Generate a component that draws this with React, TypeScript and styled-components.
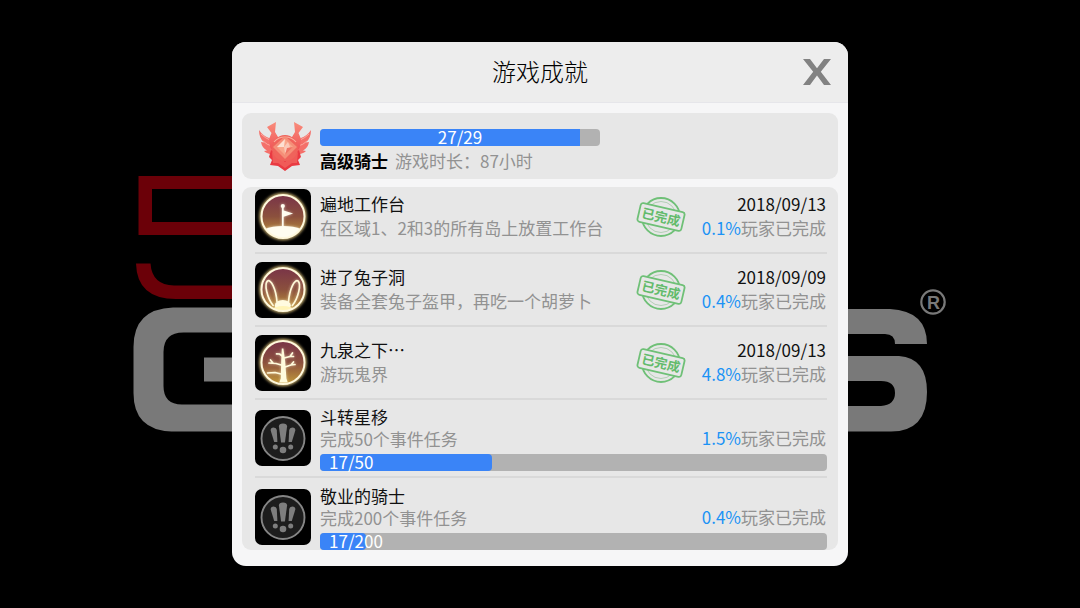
import React from "react";
import styled, { createGlobalStyle } from "styled-components";

const GlobalStyle = createGlobalStyle`
  *, *::before, *::after { box-sizing: border-box; }
  body {
    margin: 0;
    background: #000;
    color: #111;
    font-family: "Noto Sans CJK SC", "Noto Sans", sans-serif;
    font-size: 17px;
    line-height: 24px;
  }
  h1, h2, h3, p, ul { margin: 0; padding: 0; font: inherit; }
`;

const Page = styled.main`
  min-height: 100vh;
  display: flex;
  align-items: center;
  justify-content: center;
  position: relative;
`;

const Backdrop = styled.svg`
  position: absolute;
  inset: 0;
  width: 100%;
  height: 100%;
`;

const Dialog = styled.section`
  position: relative;
  width: 100%;
  max-width: 616px;
  border-radius: 14px;
  overflow: hidden;
  background: #f6f6f7;
`;

const Header = styled.header`
  display: grid;
  grid-template-columns: 1fr auto 1fr;
  align-items: center;
  height: 61px;
  padding: 0 17px;
  background: #ededed;
  border-bottom: 1px solid #e6e6ea;
`;

const Title = styled.h1`
  grid-column: 2;
  padding-bottom: 2px;
  font-size: 24px;
  font-weight: 300;
  line-height: 32px;
  color: #000;
`;

const CloseButton = styled.button`
  justify-self: end;
  display: flex;
  padding: 0;
  border: 0;
  background: none;
  color: #828282;
  cursor: pointer;
`;

const Body = styled.div`
  display: flex;
  flex-direction: column;
  gap: 8px;
  padding: 10px 10px 16px;
`;

const Profile = styled.section`
  display: flex;
  gap: 9px;
  padding: 8px 17px 6px;
  border-radius: 9px;
  background: #e7e7e7;
`;

const ProfileInfo = styled.div`
  flex: 1;
  max-width: 280px;
  padding-top: 8px;
`;

const ProfileLine = styled.p`
  display: flex;
  gap: 7px;
  padding-top: 2px;
  line-height: 25px;
  color: #929292;
  white-space: nowrap;
`;

const RankName = styled.strong`
  font-weight: 700;
  color: #000;
`;

const Track = styled.div<{ $centered?: boolean }>`
  position: relative;
  height: 17px;
  border-radius: 4px;
  background: #b2b2b2;
  color: #fff;
  line-height: 16px;
  padding-left: ${(p) => (p.$centered ? "0" : "9px")};
  text-align: ${(p) => (p.$centered ? "center" : "left")};
`;

const Fill = styled.div<{ $square?: boolean }>`
  position: absolute;
  inset: 0 auto 0 0;
  border-radius: ${(p) => (p.$square ? "4px 0 0 4px" : "4px")};
  background: #3a84f7;
`;

const TrackLabel = styled.span`
  position: relative;
`;

const List = styled.ul`
  list-style: none;
  padding: 0 11px 0 13px;
  border-radius: 9px;
  background: #e7e7e7;
`;

const Item = styled.li<{ $progress: boolean }>`
  display: flex;
  align-items: ${(p) => (p.$progress ? "flex-start" : "center")};
  gap: 9px;
  padding: ${(p) => (p.$progress ? "6px 0 5px" : "8px 0 7px")};
  border-bottom: 2px solid #d9d9d9;
  line-height: ${(p) => (p.$progress ? "22px" : "24px")};

  &:first-child { padding-top: 2px; }
  &:last-child { padding: 7px 0 0; border-bottom: 0; }
`;

const Tile = styled.div<{ $progress: boolean }>`
  flex: none;
  width: 56px;
  height: 56px;
  margin-top: ${(p) => (p.$progress ? "4px" : "0")};
  border-radius: 7px;
  overflow: hidden;
  background: #000;
  svg { display: block; }
`;

const Content = styled.div`
  flex: 1;
  min-width: 0;
`;

const Columns = styled.div`
  display: flex;
  align-items: flex-end;
  gap: 16px;
`;

const Texts = styled.div<{ $progress: boolean }>`
  flex: 1;
  min-width: 0;
  padding-bottom: ${(p) => (p.$progress ? "0" : "2px")};
`;

const Name = styled.h2`
  color: #111;
`;

const Description = styled.p`
  color: #929292;
  white-space: nowrap;
`;

const Meta = styled.div<{ $progress: boolean }>`
  padding: ${(p) => (p.$progress ? "0 1px 1px 0" : "0 1px 2px 0")};
  text-align: right;
  white-space: nowrap;
`;

const DateText = styled.time`
  display: block;
  color: #111;
`;

const Rate = styled.p`
  color: #929292;
`;

const Percent = styled.span`
  color: #1c93f5;
`;

const BarSlot = styled.div`
  padding-top: 4px;
`;

const StampSvg = styled.svg`
  flex: none;
  align-self: center;
`;

function Stamp() {
  return (
    <StampSvg width="50" height="42" viewBox="0 0 50 42" role="img" aria-label="已完成">
      <g fill="none" stroke="#6fc077">
        <circle cx="25" cy="21" r="19" strokeWidth="1.8" />
        <circle cx="25" cy="21" r="15.5" stroke="#b3cfb6" strokeWidth="1" />
      </g>
      <g transform="rotate(13 25 21)">
        <rect x="2.5" y="11.5" width="45" height="19" rx="2.5" fill="#e7e7e7" stroke="#6fc077" strokeWidth="1.8" />
        <text x="25" y="25.8" textAnchor="middle" fontSize="13" fontWeight="700" fill="#62bb6b">已完成</text>
      </g>
    </StampSvg>
  );
}

function BadgeHalf() {
  return (
    <g>
      <path d="M0 9Q4 15 10 17L16 24V34Q8 33 5 30L8 29.500Q3 27 2 21L5 21.500Q0 17 0 9z" fill="#f4706a" />
      <path d="M2 13q4 4 9 6M4 20q4 4 9 5" fill="none" stroke="#fbaaa0" strokeWidth="1" />
      <path d="M8 6 17 1 16 11 19 16 26 18V34H16L11 26 10 18 12.500 12z" fill="url(#wing)" />
      <path d="M12 29 26 38v12l-7-5-8-1 2-5-3-3z" fill="#e93a42" />
      <path d="M13 31 26 41v6l-7-5-5 0z" fill="#f05b58" />
    </g>
  );
}

function RankBadge() {
  return (
    <svg width="52" height="52" viewBox="0 0 52 52" aria-hidden="true">
      <defs>
        <linearGradient id="wing" x1="0" y1="0" x2="0" y2="1">
          <stop offset="0" stopColor="#f98d7c" />
          <stop offset="1" stopColor="#ee4a50" />
        </linearGradient>
      </defs>
      <BadgeHalf />
      <g transform="matrix(-1 0 0 1 52 0)">
        <BadgeHalf />
      </g>
      <circle cx="26" cy="27" r="13" fill="#ef635b" />
      <path d="M15 21q4-5 11-5t11 5" fill="none" stroke="#fbb09f" strokeWidth="1.2" />
      <path d="m26 15 12 11-12 12-12-12z" fill="#f58e78" />
      <path d="m26 18 8 8-8 8-8-8z" fill="#f9a78b" />
      <path d="m26 18-1 8-7 0z" fill="#fde0d2" />
      <path d="m25 26 4-5 2 5-5 6z" fill="#fbc9b8" />
      <path d="m34 26-8 8 2-7z" fill="#ef7465" />
    </svg>
  );
}

type IconKind = "flag" | "rabbit" | "tree" | "locked";

function Glow({ id, children }: { id: string; children: React.ReactNode }) {
  return (
    <svg width="56" height="56" viewBox="0 0 56 56" aria-hidden="true">
      <defs>
        <linearGradient id={`${id}-sky`} x1="0" y1="0" x2="0" y2="1">
          <stop offset="0" stopColor="#793448" />
          <stop offset="0.5" stopColor="#8b503d" />
          <stop offset="1" stopColor="#c29a3b" />
        </linearGradient>
        <clipPath id={`${id}-clip`}>
          <circle cx="28" cy="27.5" r="21.5" />
        </clipPath>
        <filter id={`${id}-blur`} x="-30%" y="-30%" width="160%" height="160%">
          <feGaussianBlur stdDeviation="1.4" />
        </filter>
      </defs>
      <circle cx="28" cy="27.5" r="22" fill="none" stroke="#e8cc84" strokeWidth="3" filter={`url(#${id}-blur)`} />
      <circle cx="28" cy="27.5" r="21.5" fill={`url(#${id}-sky)`} />
      <g clipPath={`url(#${id}-clip)`}>
        <g filter={`url(#${id}-blur)`} opacity="0.6">{children}</g>
        {children}
      </g>
      <circle cx="28" cy="27.5" r="21.5" fill="none" stroke="#fff8dc" strokeWidth="2" />
    </svg>
  );
}

function AchievementIcon({ kind }: { kind: IconKind }) {
  if (kind === "flag") {
    return (
      <Glow id="flag">
        <ellipse cx="28" cy="48" rx="26" ry="11" fill="#fffdf0" />
        <circle cx="27.8" cy="17" r="2.1" fill="#fffdf0" />
        <path d="M26.9 17h1.8v4.6l9.4 3-9.4 3.2V38h-1.8z" fill="#fffdf0" />
      </Glow>
    );
  }
  if (kind === "rabbit") {
    return (
      <Glow id="rabbit">
        <g fill="none" stroke="#fff9d8" strokeWidth="1.7">
          <path d="M18.500 44C12 36 9 22 12.500 19 16 17 21 27 22 40" />
          <path d="M37 44C43.500 36 46.500 22 43 19 39.500 17 34.500 27 33.500 40" />
        </g>
        <ellipse cx="27.800" cy="43.500" rx="8" ry="5.500" fill="#fffbe0" />
        <path d="M10 52q8-8 18-8t18 8z" fill="#fff4b8" />
      </Glow>
    );
  }
  if (kind === "tree") {
    return (
      <Glow id="tree">
        <path d="M26.800 13.500h1.600l1.800 13 1.200 17 1.400 4h-8.600l1.600-4 .4-17z" fill="#fffbdc" />
        <g fill="none" stroke="#fffbdc" strokeWidth="1.7" strokeLinecap="round" strokeLinejoin="round">
          <path d="M28 21.500l-3.500-2.500-3-.2M29 23l6-1.500 2.500-3.500M35 21.500h3.500M28 30.500l-7-2-7-.5M18 28l-2.500-3M30 32l6-2 2.500-3M36 30l4-.5M28 39.500l-8-2-7.500.5" />
        </g>
      </Glow>
    );
  }
  return (
    <svg width="56" height="56" viewBox="0 0 56 56" aria-hidden="true">
      <circle cx="28" cy="28.500" r="21.500" fill="#1d1d1d" stroke="#858585" strokeWidth="1.900" />
      <g fill="#7e7e7e">
        <path d="M23.900 16.500q0-3 4.100-3t4.100 3L29.900 32.500h-3.800z" />
        <circle cx="28" cy="40" r="3.300" />
        <path d="M15.700 20.500q-.3-3 3-3 2.700 0 3.100 2.500l.6 12h-3.200z" />
        <circle cx="20.300" cy="37" r="2.500" />
        <path d="M40.300 20.500q.3-3-3-3-2.700 0-3.100 2.500l-.6 12h3.200z" />
        <circle cx="35.700" cy="37" r="2.500" />
      </g>
    </svg>
  );
}

function BackgroundLogo() {
  return (
    <Backdrop viewBox="0 0 1080 608" preserveAspectRatio="xMidYMid slice" aria-hidden="true">
      <g fill="#6b0008">
        <path fillRule="evenodd" d="M138.500 176H300v59H138.500zM152 189v33h148v-33z" />
        <path d="M136 263.500h14.500Q152 285 174 285.500h126V299H176Q137 299 136 263.500z" />
      </g>
      <g fill="#797979">
        <path d="M300 307.500H173Q133.500 309 133.500 347v46q0 37 38 38.500H300v-74h-96v24h66v23h-88q-18.500 0-18.500-18.500V352q0-19.500 20-19.500H300z" />
        <path d="M780 309h110q37 2 37 35h-32q0-10-10-10H780z" />
        <path d="M780 356h119q28 2 28 36 0 39.500-36 39.500H780V406h101q14-1 14-13t-14-12H780z" />
        <text x="933.500" y="308.500" textAnchor="middle" fontFamily="Liberation Sans, sans-serif" fontSize="18" fontWeight="700">R</text>
      </g>
      <circle cx="933" cy="302" r="11.700" fill="none" stroke="#797979" strokeWidth="2.200" />
    </Backdrop>
  );
}

interface Achievement {
  icon: IconKind;
  name: string;
  description: string;
  percent: string;
  date?: string;
  current?: number;
  total?: number;
  fill?: number;
}

const achievements: Achievement[] = [
  { icon: "flag", name: "遍地工作台", description: "在区域1、2和3的所有岛上放置工作台", percent: "0.1%", date: "2018/09/13" },
  { icon: "rabbit", name: "进了兔子洞", description: "装备全套兔子盔甲，再吃一个胡萝卜", percent: "0.4%", date: "2018/09/09" },
  { icon: "tree", name: "九泉之下…", description: "游玩鬼界", percent: "4.8%", date: "2018/09/13" },
  { icon: "locked", name: "斗转星移", description: "完成50个事件任务", percent: "1.5%", current: 17, total: 50, fill: 34 },
  { icon: "locked", name: "敬业的骑士", description: "完成200个事件任务", percent: "0.4%", current: 17, total: 200, fill: 9 },
];

interface BarProps {
  label: string;
  current: number;
  total: number;
  fill: number;
  centered?: boolean;
}

function ProgressBar({ label, current, total, fill, centered }: BarProps) {
  return (
    <Track
      role="progressbar"
      aria-label={label}
      aria-valuenow={current}
      aria-valuemin={0}
      aria-valuemax={total}
      $centered={centered}
    >
      <Fill $square={centered} style={{ width: `${fill}%` }} />
      <TrackLabel>{current}/{total}</TrackLabel>
    </Track>
  );
}

function AchievementRow({ item }: { item: Achievement }) {
  const inProgress = item.total !== undefined;
  return (
    <Item $progress={inProgress}>
      <Tile $progress={inProgress}>
        <AchievementIcon kind={item.icon} />
      </Tile>
      <Content>
        <Columns>
          <Texts $progress={inProgress}>
            <Name>{item.name}</Name>
            <Description>{item.description}</Description>
          </Texts>
          {item.date && <Stamp />}
          <Meta $progress={inProgress}>
            {item.date && <DateText dateTime={item.date.replace(/\//g, "-")}>{item.date}</DateText>}
            <Rate><Percent>{item.percent}</Percent>玩家已完成</Rate>
          </Meta>
        </Columns>
        {inProgress && (
          <BarSlot>
            <ProgressBar label={item.name} current={item.current!} total={item.total!} fill={item.fill!} />
          </BarSlot>
        )}
      </Content>
    </Item>
  );
}

export default function App() {
  return (
    <Page lang="zh-CN">
      <GlobalStyle />
      <BackgroundLogo />
      <Dialog role="dialog" aria-labelledby="dialog-title">
        <Header>
          <Title id="dialog-title">游戏成就</Title>
          <CloseButton type="button" aria-label="关闭">
            <svg width="28" height="26" viewBox="0 0 28 26" fill="currentColor" aria-hidden="true">
              <path d="M0 0h7L14 9.200 21 0H28L17.800 12.800 28 26h-7L14 16.600 7 26H0l10.200-13.200z" />
            </svg>
          </CloseButton>
        </Header>
        <Body>
          <Profile>
            <RankBadge />
            <ProfileInfo>
              <ProgressBar label="成就进度" current={27} total={29} fill={93} centered />
              <ProfileLine><RankName>高级骑士</RankName>游戏时长：87小时</ProfileLine>
            </ProfileInfo>
          </Profile>
          <List>
            {achievements.map((item) => (
              <AchievementRow key={item.name} item={item} />
            ))}
          </List>
        </Body>
      </Dialog>
    </Page>
  );
}
